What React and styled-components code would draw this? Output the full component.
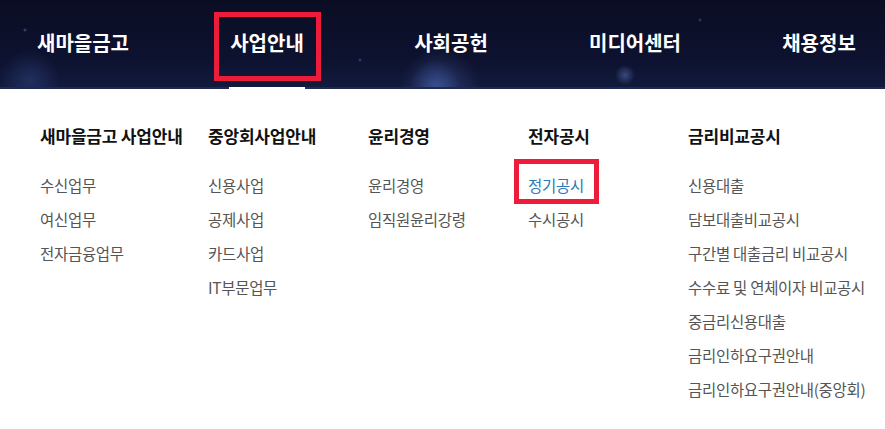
import React from 'react';
import styled, { createGlobalStyle, css } from 'styled-components';

const GlobalStyle = createGlobalStyle`
  html, body {
    margin: 0;
    padding: 0;
    background: #fff;
  }
  body {
    font-family: "Noto Sans CJK KR", "Noto Sans", sans-serif;
    width: 885px;
    height: 429px;
    overflow: hidden;
  }
  ul {
    list-style: none;
    margin: 0;
    padding: 0;
  }
`;

const redBox = css`
  &::after {
    content: '';
    position: absolute;
    border: 5px solid #ee1c3b;
    pointer-events: none;
  }
`;

const Header = styled.header`
  position: relative;
  height: 89px;
  background:
    radial-gradient(circle at 440px 88px, rgba(90, 120, 200, 0.35) 0, rgba(90, 120, 200, 0) 40px),
    radial-gradient(circle at 625px 75px, rgba(120, 150, 230, 0.4) 0, rgba(120, 150, 230, 0) 10px),
    radial-gradient(circle at 435px 85px, rgba(60, 90, 170, 0.5) 0, rgba(60, 90, 170, 0) 25px),
    radial-gradient(circle at 30px 80px, rgba(70, 100, 180, 0.3) 0, rgba(70, 100, 180, 0) 30px),
    radial-gradient(circle at 25px 30px, rgba(140, 160, 220, 0.5) 0, rgba(140, 160, 220, 0) 2px),
    radial-gradient(circle at 700px 20px, rgba(140, 160, 220, 0.4) 0, rgba(140, 160, 220, 0) 2px),
    radial-gradient(circle at 360px 60px, rgba(140, 160, 220, 0.4) 0, rgba(140, 160, 220, 0) 2px),
    linear-gradient(180deg, #0a0d22 0%, #0d1230 70%, #121a3d 100%);
  border-bottom: 2px solid #1e2a52;
  box-sizing: border-box;
`;

const Nav = styled.ul`
  display: flex;
  margin-left: -9px !important;
  height: 100%;
`;

const NavItem = styled.li`
  position: relative;
  width: 184px;
  flex-shrink: 0;
  display: flex;
  justify-content: center;
  align-items: center;
  padding-bottom: 2px;
  &::before {
    content: '';
    position: absolute;
    left: 50%;
    bottom: -3px;
    width: 76px;
    margin-left: -38px;
    height: 3px;
    background: #fff;
    display: ${({ $active }) => ($active ? 'block' : 'none')};
  }
`;

const NavLabel = styled.span`
  position: relative;
  color: #fff;
  font-size: 20px;
  font-weight: 700;
  letter-spacing: 0;
  line-height: 24px;
  ${({ $marked }) => $marked && redBox}
  &::after {
    top: -19px;
    bottom: -26px;
    left: -16px;
    right: -17px;
  }
`;

const Panel = styled.div`
  display: flex;
  padding: 34px 0 0 40px;
`;

const Column = styled.div`
  width: ${({ $w }) => $w}px;
  flex-shrink: 0;
`;

const ColTitle = styled.h3`
  margin: 0;
  font-size: 17px;
  font-weight: 700;
  color: #111;
  line-height: 26px;
  letter-spacing: -0.2px;
  white-space: nowrap;
`;

const SubList = styled.ul`
  margin-top: 19px !important;
`;

const SubItem = styled.li`
  line-height: 34px;
  height: 34px;
`;

const SubLink = styled.span`
  position: relative;
  font-size: 15.5px;
  letter-spacing: -0.3px;
  color: ${({ $marked }) => ($marked ? '#2a7ab6' : '#555')};
  white-space: nowrap;
  ${({ $marked }) => $marked && redBox}
  &::after {
    top: -15px;
    bottom: -8px;
    left: -14px;
    right: -15px;
  }
`;

const menu = [
  { label: '새마을금고' },
  { label: '사업안내', active: true },
  { label: '사회공헌' },
  { label: '미디어센터' },
  { label: '채용정보' },
];

const columns = [
  { title: '새마을금고 사업안내', w: 168, items: ['수신업무', '여신업무', '전자금융업무'] },
  { title: '중앙회사업안내', w: 160, items: ['신용사업', '공제사업', '카드사업', 'IT부문업무'] },
  { title: '윤리경영', w: 160, items: ['윤리경영', '임직원윤리강령'] },
  { title: '전자공시', w: 160, items: ['정기공시', '수시공시'], marked: '정기공시' },
  {
    title: '금리비교공시',
    w: 197,
    items: [
      '신용대출',
      '담보대출비교공시',
      '구간별 대출금리 비교공시',
      '수수료 및 연체이자 비교공시',
      '중금리신용대출',
      '금리인하요구권안내',
      '금리인하요구권안내(중앙회)',
    ],
  },
];

const App = () => {
  return (
    <>
      <GlobalStyle />
      <Header>
        <Nav>
          {menu.map((m) => (
            <NavItem key={m.label} $active={m.active}>
              <NavLabel $marked={m.active}>{m.label}</NavLabel>
            </NavItem>
          ))}
        </Nav>
      </Header>
      <Panel>
        {columns.map((col) => (
          <Column key={col.title} $w={col.w}>
            <ColTitle>{col.title}</ColTitle>
            <SubList>
              {col.items.map((item) => (
                <SubItem key={item}>
                  <SubLink $marked={col.marked === item}>{item}</SubLink>
                </SubItem>
              ))}
            </SubList>
          </Column>
        ))}
      </Panel>
    </>
  );
};

export default App;
